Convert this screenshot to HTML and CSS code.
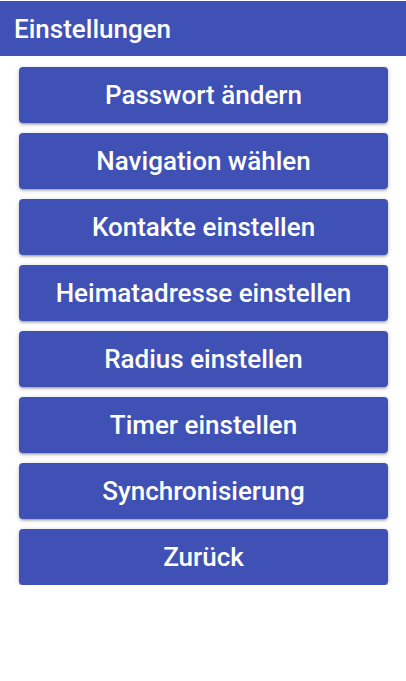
FILE: index.html
```html
<!DOCTYPE html>
<html lang="de">
<head>
<meta charset="utf-8">
<link rel="stylesheet" href="styles.css">
</head>
<body>
<header class="toolbar">Einstellungen</header>
<main class="menu">
  <button class="btn">Passwort ändern</button>
  <button class="btn">Navigation wählen</button>
  <button class="btn">Kontakte einstellen</button>
  <button class="btn">Heimatadresse einstellen</button>
  <button class="btn">Radius einstellen</button>
  <button class="btn">Timer einstellen</button>
  <button class="btn">Synchronisierung</button>
  <button class="btn">Zurück</button>
</main>
</body>
</html>
```
FILE: styles.css
```css
html, body {
  margin: 0;
  padding: 0;
  background: #fff;
  font-family: Roboto, "Liberation Sans", sans-serif;
}
.toolbar {
  margin-top: 1px;
  height: 55px;
  background: #3f51b5;
  color: #fff;
  font-size: 26px;
  font-weight: 500;
  display: flex;
  align-items: center;
  padding-left: 14px;
  box-sizing: border-box;
}
.menu {
  display: flex;
  flex-direction: column;
  gap: 10px;
  padding: 11px 18px 0 19px;
}
.btn {
  height: 56px;
  border: none;
  border-radius: 4px;
  background: #3f51b5;
  color: #fff;
  font-family: Roboto, "Liberation Sans", sans-serif;
  font-size: 26px;
  font-weight: 500;
  box-shadow: 0 2px 2px 0 rgba(0,0,0,.14), 0 3px 1px -2px rgba(0,0,0,.12), 0 1px 5px 0 rgba(0,0,0,.2);
  padding: 0;
}
```
